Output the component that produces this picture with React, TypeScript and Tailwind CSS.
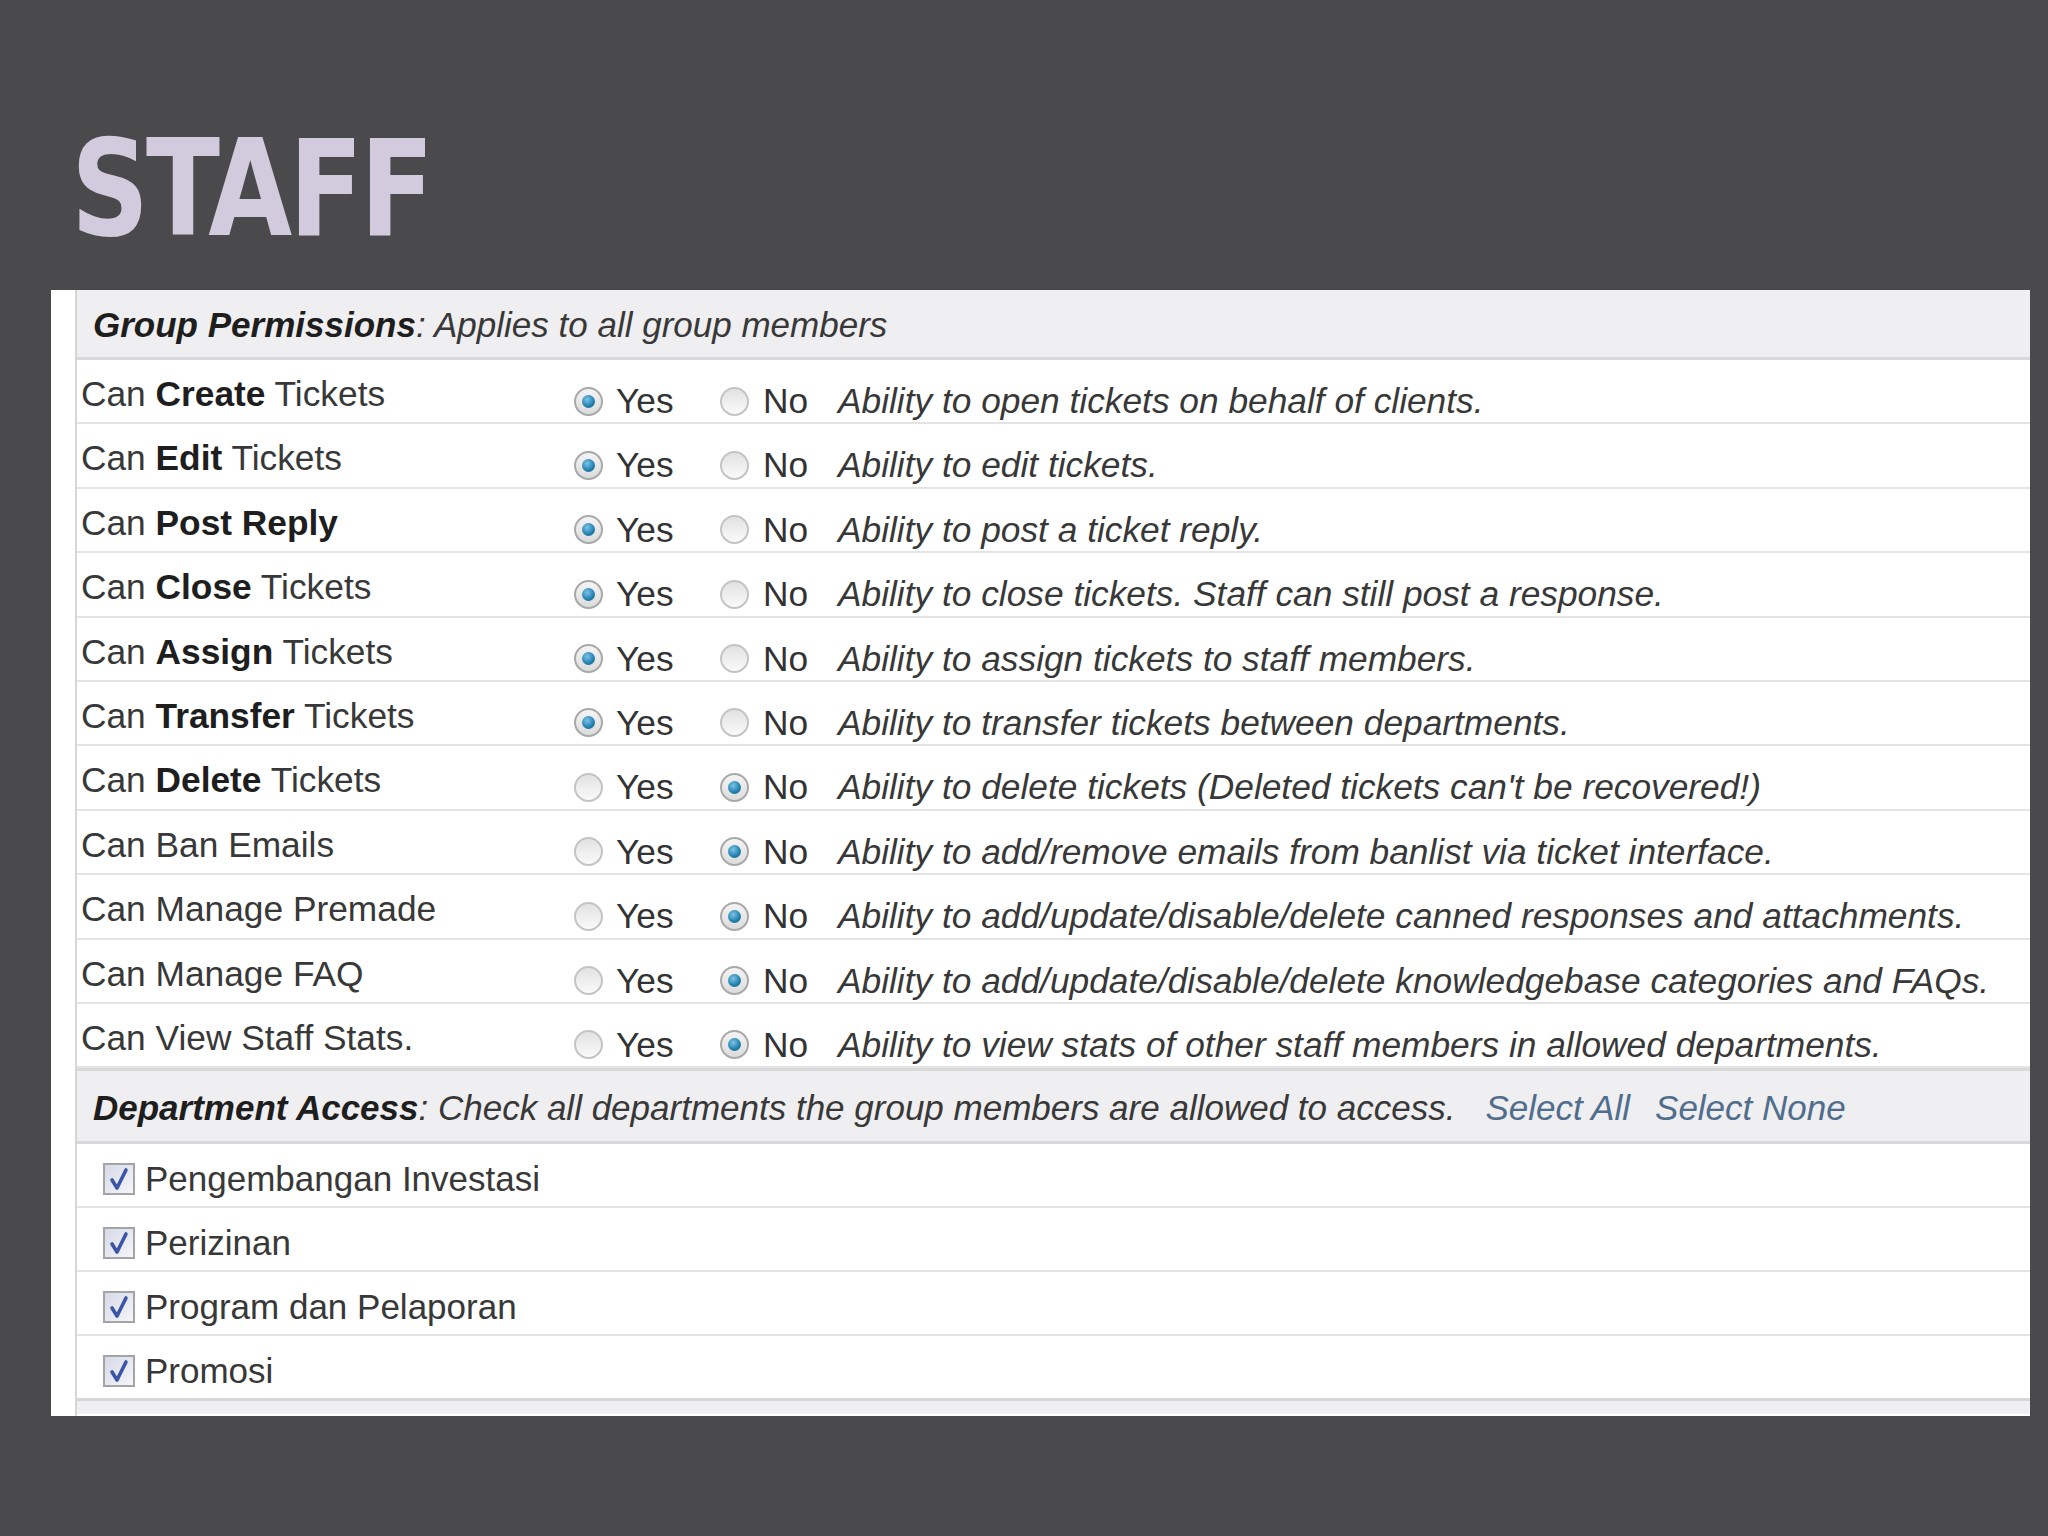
import React from 'react';

type Perm = {
  pre: string;
  bold?: string;
  post?: string;
  yes: boolean;
  desc: string;
};

const perms: Perm[] = [
  { pre: 'Can ', bold: 'Create', post: ' Tickets', yes: true, desc: 'Ability to open tickets on behalf of clients.' },
  { pre: 'Can ', bold: 'Edit', post: ' Tickets', yes: true, desc: 'Ability to edit tickets.' },
  { pre: 'Can ', bold: 'Post Reply', yes: true, desc: 'Ability to post a ticket reply.' },
  { pre: 'Can ', bold: 'Close', post: ' Tickets', yes: true, desc: 'Ability to close tickets. Staff can still post a response.' },
  { pre: 'Can ', bold: 'Assign', post: ' Tickets', yes: true, desc: 'Ability to assign tickets to staff members.' },
  { pre: 'Can ', bold: 'Transfer', post: ' Tickets', yes: true, desc: 'Ability to transfer tickets between departments.' },
  { pre: 'Can ', bold: 'Delete', post: ' Tickets', yes: false, desc: "Ability to delete tickets (Deleted tickets can't be recovered!)" },
  { pre: 'Can Ban Emails', yes: false, desc: 'Ability to add/remove emails from banlist via ticket interface.' },
  { pre: 'Can Manage Premade', yes: false, desc: 'Ability to add/update/disable/delete canned responses and attachments.' },
  { pre: 'Can Manage FAQ', yes: false, desc: 'Ability to add/update/disable/delete knowledgebase categories and FAQs.' },
  { pre: 'Can View Staff Stats.', yes: false, desc: 'Ability to view stats of other staff members in allowed departments.' },
];

const departments = ['Pengembangan Investasi', 'Perizinan', 'Program dan Pelaporan', 'Promosi'];

function Radio({ on }: { on: boolean }) {
  if (on) {
    return (
      <span className="flex h-[29px] w-[29px] shrink-0 items-center justify-center rounded-full border-[2px] border-[#a9a9a9] bg-gradient-to-b from-[#f4f4f4] to-[#dcdcdc]">
        <span className="h-[13px] w-[13px] rounded-full bg-[radial-gradient(circle_at_40%_35%,#7cc4e6,#1f7fae_60%,#155f86)]" />
      </span>
    );
  }
  return (
    <span className="h-[29px] w-[29px] shrink-0 rounded-full border-[2px] border-[#c4c4c4] bg-gradient-to-b from-[#e2e2e2] to-[#fafafa]" />
  );
}

function Checkbox() {
  return (
    <span className="flex h-[32px] w-[32px] shrink-0 items-center justify-center border-[2px] border-[#a4a4a4] bg-gradient-to-br from-[#d5dae8] to-[#f5f6fa]">
      <svg width="22" height="24" viewBox="0 0 22 24">
        <path d="M4 13 L9 21 L18 3" fill="none" stroke="#3d55a5" strokeWidth="3.6" strokeLinecap="round" strokeLinejoin="round" />
      </svg>
    </span>
  );
}

export default function App() {
  return (
    <div className="h-[1536px] w-[2048px] overflow-hidden bg-[#4a494c] font-['Liberation_Sans',Arial,sans-serif]">
      {/* Slide title */}
      <h1 className="pl-[71px] pt-[122px] font-['DejaVu_Sans',sans-serif] text-[134px] font-bold leading-none tracking-[-4px] text-[#d2cadd]">
        <span className="inline-block origin-left [transform:scaleX(0.81)]">STAFF</span>
      </h1>

      {/* Screenshot panel */}
      <div className="ml-[51px] mt-[34px] h-[1126px] w-[1979px] bg-white pl-[24px]">
        <div className="h-full border-l-[2px] border-[#d6d6d6]">
          <div className="flex h-[70px] items-center border-b-[3px] border-[#d9d9d9] bg-[#efeef0] pl-[16px] pt-[3px] text-[35px] italic text-[#383838]">
            <span className="font-bold text-[#1e1e1e]">Group Permissions</span>
            <span>: Applies to all group members</span>
          </div>

          {perms.map((p, i) => (
            <div key={i} className="flex h-[64.4px] items-start border-b-[2px] border-[#e4e4e4] text-[35.3px] text-[#333]">
              <div className="w-[497px] shrink-0 pl-[4px] pt-[14px] leading-[40px] text-[#383838]">
                {p.pre}
                {p.bold && <span className="font-bold text-[#1e1e1e]">{p.bold}</span>}
                {p.post}
              </div>
              <div className="flex items-center pt-[21px] leading-[40px]">
                <Radio on={p.yes} />
                <span className="ml-[13px] w-[104px]">Yes</span>
                <Radio on={!p.yes} />
                <span className="ml-[14px] w-[75px]">No</span>
                <span className="italic text-[#383838]">{p.desc}</span>
              </div>
            </div>
          ))}

          <div className="flex h-[76px] items-center border-b-[3px] border-t-[3px] border-[#d9d9d9] bg-[#efeef0] pl-[16px] pt-[3px] text-[35px] italic text-[#383838]">
            <span className="font-bold text-[#1e1e1e]">Department Access</span>
            <span>: Check all departments the group members are allowed to access.</span>
            <span className="ml-[30px] text-[#4f6d8c]">Select All</span>
            <span className="ml-[25px] text-[#4f6d8c]">Select None</span>
          </div>

          {departments.map((d) => (
            <div key={d} className="flex h-[64px] items-center border-b-[2px] border-[#e4e4e4] pl-[26px] pt-[8px] text-[35px] text-[#383838]">
              <Checkbox />
              <span className="ml-[10px] leading-[40px]">{d}</span>
            </div>
          ))}
          <div className="-mt-[2px] h-[3px] bg-[#d6d6d6]" />
          <div className="h-[13px] bg-[#efeef0]" />
        </div>
      </div>
    </div>
  );
}
